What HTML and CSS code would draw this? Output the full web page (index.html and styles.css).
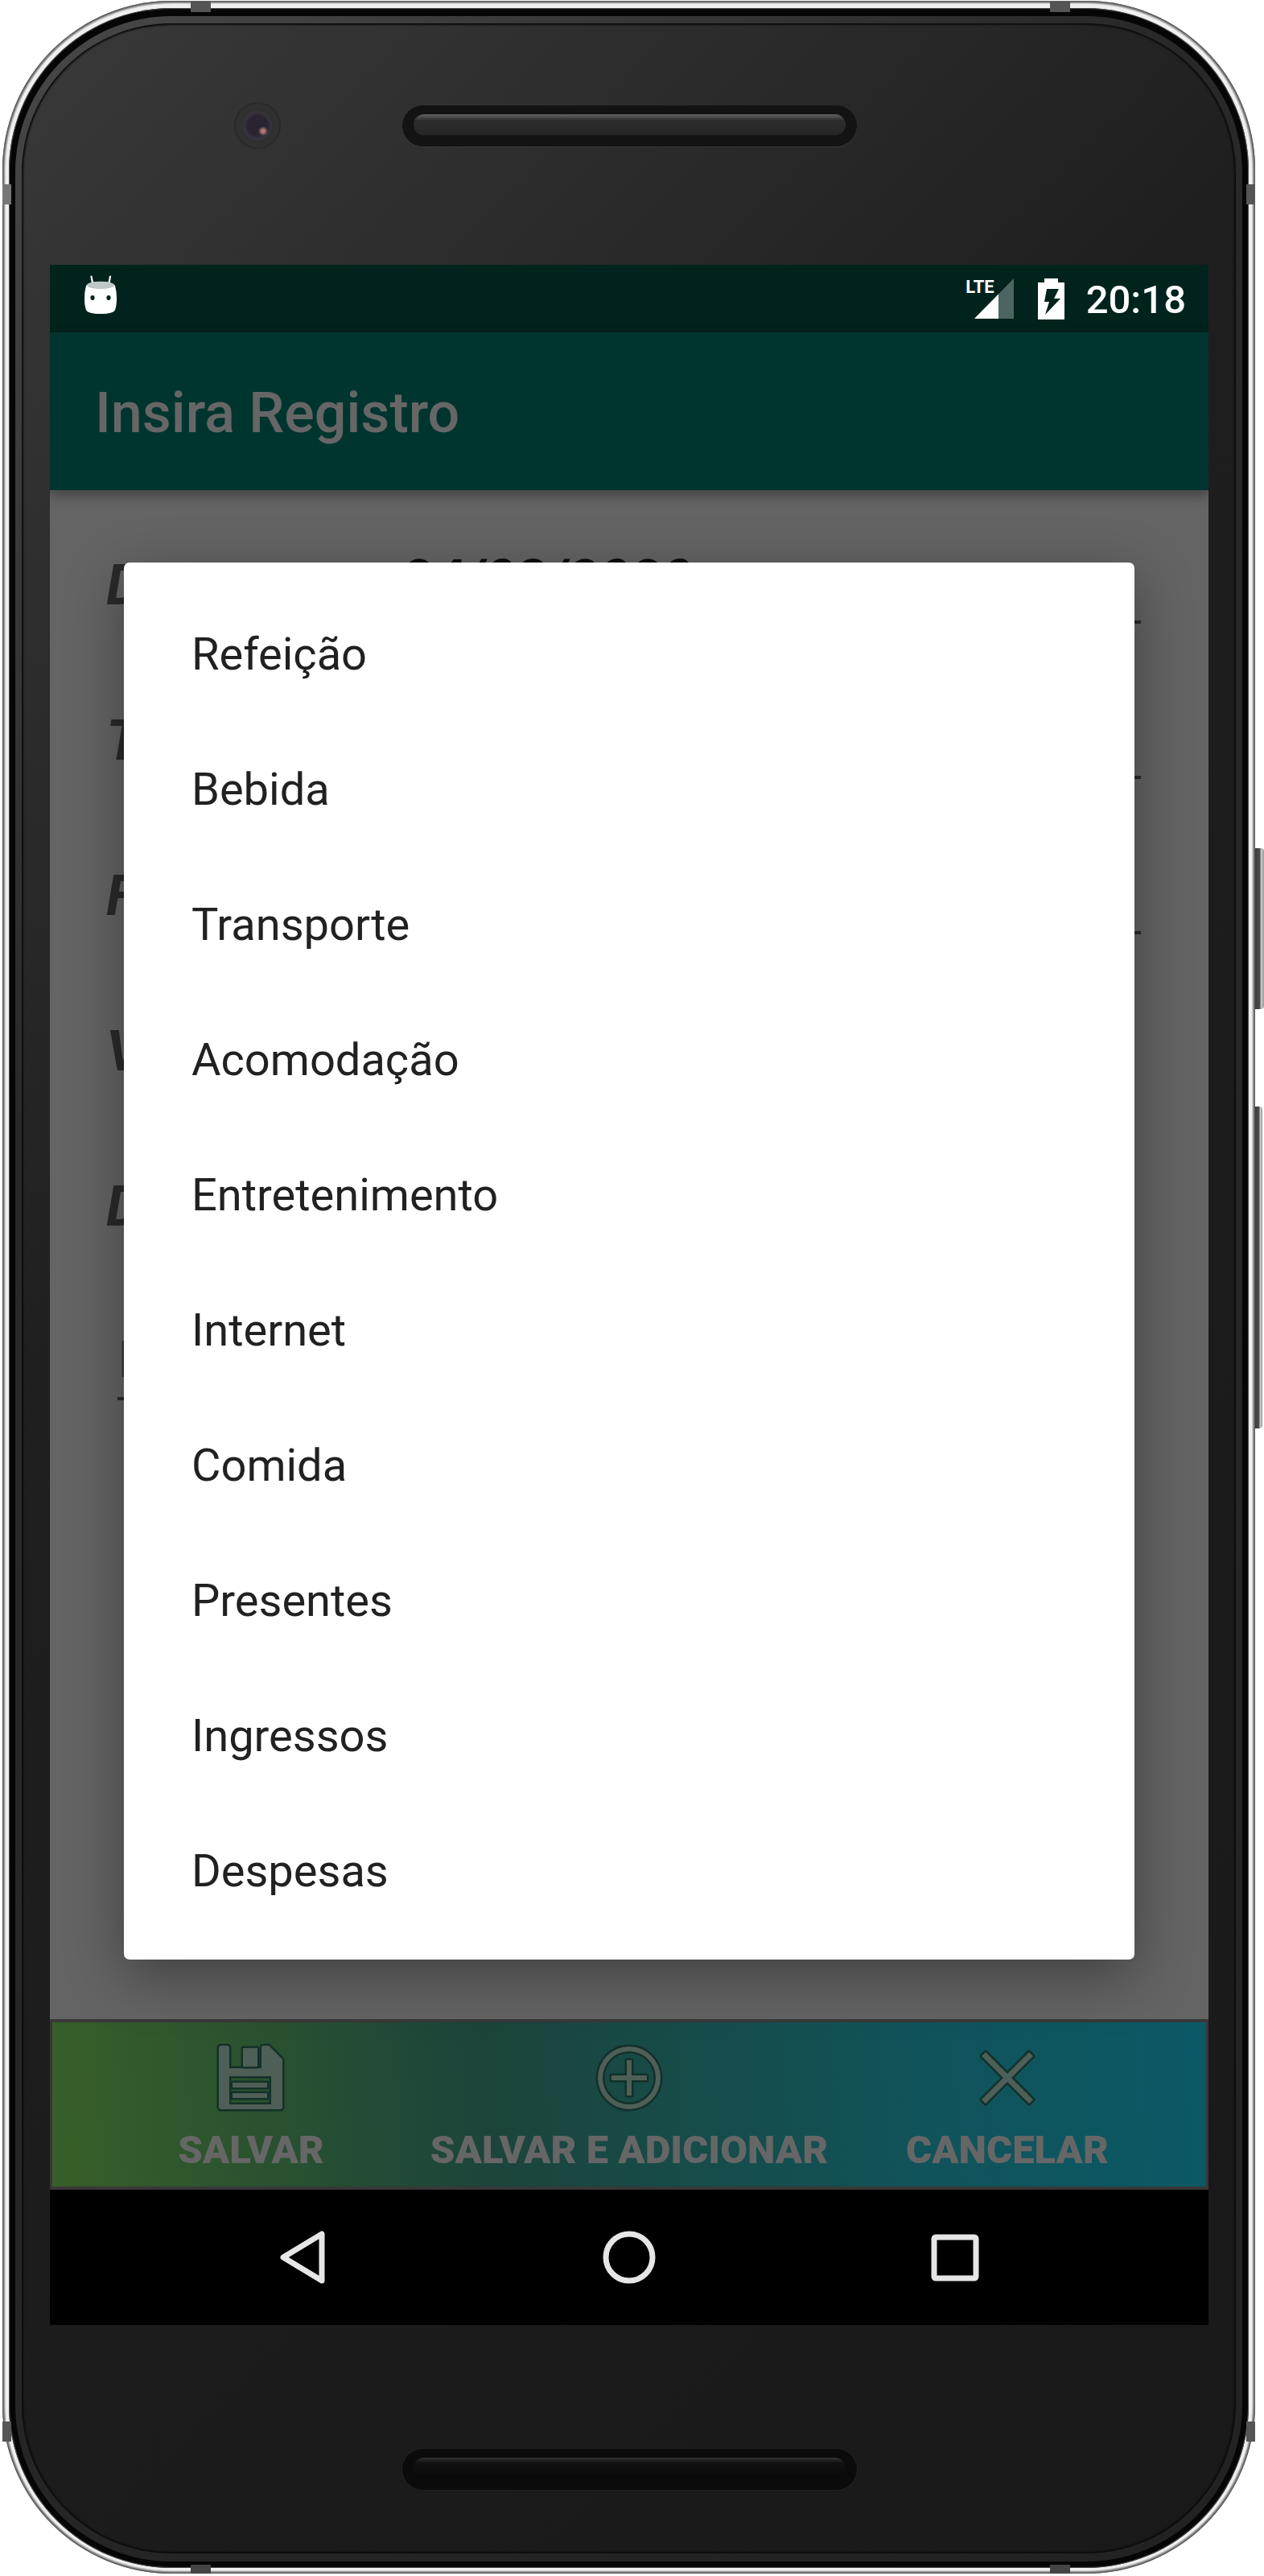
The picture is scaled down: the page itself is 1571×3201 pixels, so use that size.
FILE: index.html
```html
<!DOCTYPE html>
<html lang="pt-BR">
<head>
<meta charset="utf-8">
<meta name="viewport" content="width=device-width, initial-scale=1">
<title>Insira Registro</title>
<link rel="stylesheet" href="styles.css">
</head>
<body>
<div class="phone">
  <span class="band band-top band-start"></span>
  <span class="band band-top band-end"></span>
  <span class="band band-bottom band-start"></span>
  <span class="band band-bottom band-end"></span>
  <span class="notch notch-left notch-upper"></span>
  <span class="notch notch-right notch-upper"></span>
  <span class="notch notch-left notch-lower"></span>
  <span class="notch notch-right notch-lower"></span>
  <span class="side-key power"></span>
  <span class="side-key volume"></span>
  <div class="rim"><div class="ridge"><div class="face">
    <div class="forehead">
      <span class="camera"></span>
      <span class="speaker"><span class="slot"></span></span>
    </div>

    <div class="screen">
      <header class="status">
        <svg class="robot" viewBox="0 0 40 50" aria-hidden="true">
          <path d="M8.500 1.500 11 15M32 1.500 29.500 15" stroke="#fff" stroke-width="2.200" stroke-linecap="round"/>
          <path d="M2 13Q5 8 20 8T38 13Q40 20 40 29T38 43Q36 48 20 48T2 43Q0 38 0 29T2 13Z" fill="#fff"/>
          <ellipse cx="20" cy="12.500" rx="17" ry="4.700" fill="#bfc8c6"/>
          <ellipse cx="10" cy="28" rx="2.600" ry="3" fill="#00231d"/>
          <ellipse cx="30" cy="28" rx="2.600" ry="3" fill="#00231d"/>
        </svg>
        <div class="status-right">
          <span class="network">LTE</span>
          <svg class="signal" viewBox="0 0 49 50" aria-hidden="true">
            <path d="M49 0V50H0Z" fill="#4d6560"/>
            <path d="M30 19.400V50H0Z" fill="#fff"/>
          </svg>
          <svg class="battery" viewBox="0 0 33 51" aria-hidden="true">
            <path d="M8 0H25V5H33V51H0V5H8Z" fill="#fff"/>
            <path d="M11 13H26L20 25H28L9 45L14 29H8Z" fill="#00231d"/>
          </svg>
          <time class="clock">20:18</time>
        </div>
      </header>

      <div class="toolbar"><h1 class="title">Insira Registro</h1></div>

      <main class="form">
        <div class="row">
          <label class="label" for="data">Data</label>
          <input class="field date" id="data" type="text" value="24/03/2020">
        </div>
        <div class="row">
          <label class="label" for="tipo">Tipo</label>
          <select class="field" id="tipo"></select>
        </div>
        <div class="row">
          <label class="label" for="forma">Forma</label>
          <select class="field" id="forma"></select>
        </div>
        <div class="row">
          <label class="label" for="valor">Valor</label>
          <input class="field short" id="valor" type="text">
        </div>
        <div class="row"><label class="label" for="descricao">Descrição</label></div>
        <div class="row note-row">
          <input class="field note" id="descricao" type="text" placeholder="Insira">
        </div>
      </main>

      <footer class="actions">
        <button class="action" type="button">
          <svg class="action-icon" viewBox="0 0 84 84" aria-hidden="true">
            <path class="ink" fill-rule="evenodd" d="M5 2H12Q15 2 15 5V30H55V5Q55 2 58 2H64L81 19V78Q81 81 78 81H5Q2 81 2 78V5Q2 2 5 2ZM15 40V75H67V40Z"/>
            <path class="ink" d="M32 5H50V28H32ZM19 48H62V54H19ZM19 61H62V67H19Z"/>
          </svg>
          <span>SALVAR</span>
        </button>
        <button class="action" type="button">
          <svg class="action-icon" viewBox="0 0 84 84" aria-hidden="true">
            <path class="ink" fill-rule="evenodd" d="M42 3A39 39 0 0 1 42 81A39 39 0 0 1 42 3ZM42 9A33 33 0 0 0 42 75A33 33 0 0 0 42 9Z"/>
            <path class="ink" d="M39 20H45V39H64V45H45V64H39V45H20V39H39Z"/>
          </svg>
          <span>SALVAR E ADICIONAR</span>
        </button>
        <button class="action" type="button">
          <svg class="action-icon" viewBox="0 0 84 84" aria-hidden="true">
            <path class="ink" d="M15 10 42 37 69 10 74 15 47 42 74 69 69 74 42 47 15 74 10 69 37 42 10 15Z"/>
          </svg>
          <span>CANCELAR</span>
        </button>
      </footer>

      <nav class="nav">
        <button class="nav-key" type="button" aria-label="Voltar">
          <svg class="nav-icon" viewBox="0 0 66 66" aria-hidden="true"><path d="M56 4V62L8 33Z"/></svg>
        </button>
        <button class="nav-key" type="button" aria-label="Início">
          <svg class="nav-icon" viewBox="0 0 66 66" aria-hidden="true"><circle cx="33" cy="33" r="29"/></svg>
        </button>
        <button class="nav-key" type="button" aria-label="Recentes">
          <svg class="nav-icon" viewBox="0 0 66 66" aria-hidden="true"><rect x="7" y="8" width="52" height="51" rx="2"/></svg>
        </button>
      </nav>

      <ul class="popup" role="listbox" aria-label="Tipo">
        <li class="option" role="option">Refeição</li>
        <li class="option" role="option">Bebida</li>
        <li class="option" role="option">Transporte</li>
        <li class="option" role="option">Acomodação</li>
        <li class="option" role="option">Entretenimento</li>
        <li class="option" role="option">Internet</li>
        <li class="option" role="option">Comida</li>
        <li class="option" role="option">Presentes</li>
        <li class="option" role="option">Ingressos</li>
        <li class="option" role="option">Despesas</li>
      </ul>
    </div>

    <div class="chin">
      <span class="speaker speaker-low"><span class="slot"></span></span>
    </div>
  </div></div></div>
</div>
</body>
</html>
```
FILE: styles.css
```css
* { box-sizing: border-box; }

body {
  margin: 0;
  padding: 1px 11px 2px 3px;
  background: #fff;
  font-family: Roboto, "Liberation Sans", sans-serif;
}

button, input, select { font: inherit; border: 0; background: none; margin: 0; }

/* Phone body */
.phone {
  position: relative;
  padding: 9px 8px 7px;
  border-radius: 210px;
  background: #f0f0f0;
  box-shadow: inset 0 0 0 1px #5c5c5c, inset 0 0 0 2px #777, inset 0 0 0 3px #a2a2a2, inset 0 0 0 4px #cfcfcf;
}
.rim {
  padding: 10px 8px 8px;
  border-radius: 202px;
  background: #060606;
  box-shadow: inset 0 0 1px 1px #555;
}
.ridge {
  padding: 9px 8px 10px;
  border-radius: 194px;
  background: linear-gradient(135deg, #484848, #292929 30%, #222);
}
.face {
  padding: 0 34px 0 35px;
  border-radius: 186px;
  background: linear-gradient(135deg, #393939, #1e1e1e 38%, #191919);
  box-shadow: inset 0 0 2px 2px #0c0c0c;
}
.forehead { position: relative; height: 300px; padding-top: 102px; }
.chin { height: 284px; padding-top: 154px; }

.speaker {
  display: block;
  width: 565px;
  height: 51px;
  margin: 0 auto;
  padding: 11px 14px;
  border-radius: 26px;
  background: #131313;
  box-shadow: 0 1px 1px #3c3c3c;
}
.slot {
  display: block;
  height: 26px;
  border-radius: 13px;
  background: linear-gradient(#636363, #2c2c2c 30%, #262626);
}
.speaker-low { background: #0b0b0b; box-shadow: 0 0 1px 1px #222; }
.speaker-low .slot { background: linear-gradient(#333, #111 25%, #090909); }

.camera {
  position: absolute;
  left: 229px;
  top: 98px;
  width: 58px;
  height: 58px;
  border-radius: 50%;
  background: radial-gradient(circle at 62% 62%, #b07a70 0 2px, transparent 6px),
    radial-gradient(circle, #2a2430 0 12px, #38343f 17px, #2f2f2f 19px, #313131 26px, #262626 29px);
}

.band, .notch, .side-key { position: absolute; background: #555; }
.band { width: 25px; height: 13px; }
.band-top { top: 1px; }
.band-bottom { bottom: 0; height: 11px; background: #444; }
.band-start { left: 234px; }
.band-end { right: 230px; }
.notch { width: 11px; height: 25px; background: #777; }
.notch-left { left: 0; }
.notch-right { right: 0; background: #555; }
.notch-upper { top: 228px; }
.notch-lower { bottom: 164px; background: #555; }
.side-key {
  left: 100%;
  width: 11px;
  border-radius: 0 4px 4px 0;
  background: linear-gradient(90deg, #3c3c3c, #4c4c4c 50%, #ccc 70%, #999);
}
.power { top: 1053px; height: 200px; }
.volume { top: 1374px; height: 400px; width: 9px; }

/* Screen */
.screen {
  position: relative;
  display: flex;
  flex-direction: column;
  overflow: hidden;
  background: #646464;
}
.status {
  display: flex;
  align-items: center;
  justify-content: space-between;
  height: 84px;
  padding: 0 28px 0 43px;
  background: #00231d;
}
.robot { width: 40px; height: 50px; margin-bottom: 8px; fill: none; }
.status-right { display: flex; align-items: center; }
.network {
  margin: -28px -25px 0 0;
  color: #fff;
  font-size: 22px;
  font-weight: 700;
  line-height: 24px;
}
.signal { width: 49px; height: 50px; margin-right: 30px; }
.battery { width: 33px; height: 51px; margin-right: 27px; }
.clock { padding-top: 3px; color: #fff; font-size: 49px; font-weight: 500; line-height: 81px; }

.toolbar {
  position: relative;
  display: flex;
  align-items: center;
  height: 196px;
  padding: 4px 56px 0;
  background: #00352f;
  box-shadow: 0 6px 14px rgba(0, 0, 0, .35);
}
.title { margin: 0; color: #666; font-size: 70px; font-weight: 500; line-height: 84px; }

.form { min-height: 1900px; padding: 21px 84px 0 70px; }
.row { display: flex; align-items: center; height: 193px; }
.label {
  flex: none;
  width: 361px;
  color: #2a2a2a;
  font-size: 70px;
  font-style: italic;
  font-weight: 700;
  line-height: 84px;
}
.field {
  flex: 1;
  min-width: 0;
  height: 97px;
  padding: 0 5px 8px;
  border-bottom: 4px solid #2a2a2a;
  border-radius: 0;
  appearance: none;
  outline: 0;
}
.date { color: #0d0d0d; font-size: 70px; font-style: italic; font-weight: 700; }
.short { flex: none; width: 500px; }
.note-row { padding: 0 14px; }
.note { flex: none; width: 900px; padding: 0; color: #3b3b3b; font-size: 63px; }
.note::placeholder { color: #3b3b3b; opacity: 1; }

.actions {
  display: grid;
  grid-template-columns: repeat(3, minmax(0, 1fr));
  height: 212px;
  padding: 10px 12px 0;
  border: solid #383838;
  border-width: 4px 3px;
  background: linear-gradient(86deg, #385f28, #2a5230 18%, #1c443b 38%, #184a45 50%, #11535a 75%, #0a5966);
}
.action {
  display: flex;
  flex-direction: column;
  align-items: center;
  justify-content: center;
  gap: 20px;
  padding: 0;
  color: #666;
  font-size: 49px;
  font-weight: 900;
  line-height: 56px;
  white-space: nowrap;
}
.action-icon { width: 84px; height: 84px; overflow: visible; }
.ink { fill: #4d5f56; stroke: #14302a; stroke-width: 5; stroke-linejoin: round; paint-order: stroke; }

.nav {
  display: grid;
  grid-template-columns: repeat(3, 405px);
  justify-content: center;
  height: 168px;
  background: #000;
}
.nav-key { display: flex; align-items: center; justify-content: center; padding: 0; }
.nav-icon { width: 66px; height: 66px; fill: none; stroke: #e6e6e6; stroke-width: 7; stroke-linejoin: round; }

/* Options list over the form */
.popup {
  position: absolute;
  top: 370px;
  left: 92px;
  right: 92px;
  margin: 0;
  padding: 28px 0;
  list-style: none;
  border-radius: 7px;
  background: #fff;
  box-shadow: 0 20px 70px rgba(0, 0, 0, .36);
}
.option { padding: 54px 84px 50px; color: #212121; font-size: 56px; line-height: 64px; }
```
